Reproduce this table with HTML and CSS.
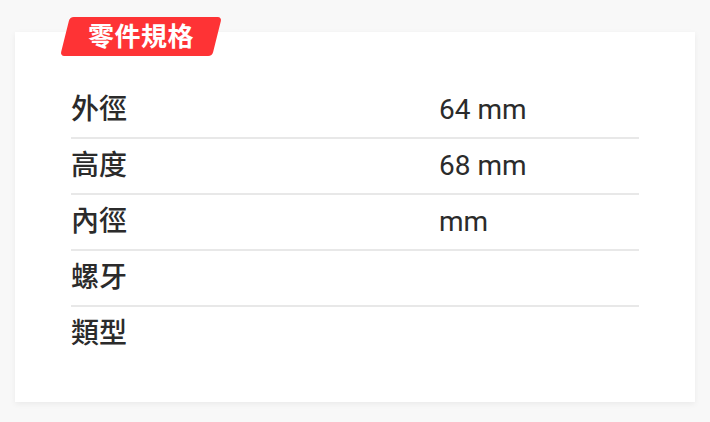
FILE: index.html
```html
<!DOCTYPE html>
<html lang="zh-Hant">
<head>
<meta charset="utf-8">
<link rel="stylesheet" href="styles.css">
</head>
<body>
<section class="card">
  <div class="badge"><span class="badge-text">零件規格</span></div>
  <div class="spec">
    <div class="row"><span class="label">外徑</span><span class="value">64 mm</span></div>
    <div class="row"><span class="label">高度</span><span class="value">68 mm</span></div>
    <div class="row"><span class="label">內徑</span><span class="value">mm</span></div>
    <div class="row"><span class="label">螺牙</span><span class="value"></span></div>
    <div class="row"><span class="label">類型</span><span class="value"></span></div>
  </div>
</section>
</body>
</html>
```
FILE: styles.css
```css
* { box-sizing: border-box; }
html, body { margin: 0; }
body {
  background: #f8f8f8;
  padding: 32px 15px 20px;
  font-family: Roboto, "Noto Sans CJK TC", "Noto Sans", sans-serif;
  color: #2b2b2b;
}
.card {
  position: relative;
  background: #fff;
  height: 370px;
  padding: 51px 56px 41px;
  box-shadow: 0 2px 6px rgba(0,0,0,0.06);
}
.badge {
  position: absolute;
  top: -15px;
  left: 50px;
  width: 152px;
  height: 39px;
  background: #fe3335;
  border-radius: 4px;
  transform: skewX(-14deg);
  display: flex;
  align-items: center;
  justify-content: center;
}
.badge-text {
  transform: skewX(14deg);
  color: #fff;
  font-weight: 700;
  font-size: 26px;
  line-height: 1;
  letter-spacing: 0.5px;
}
.spec {
  display: flex;
  flex-direction: column;
}
.row {
  display: grid;
  grid-template-columns: 368px 1fr;
  height: 56px;
  align-items: center;
  border-bottom: 2px solid #e8e8e8;
  font-size: 28px;
  line-height: 1;
}
.row:last-child { border-bottom: none; height: 54px; }
.label { font-weight: 500; }
.value { font-weight: 400; }
```
